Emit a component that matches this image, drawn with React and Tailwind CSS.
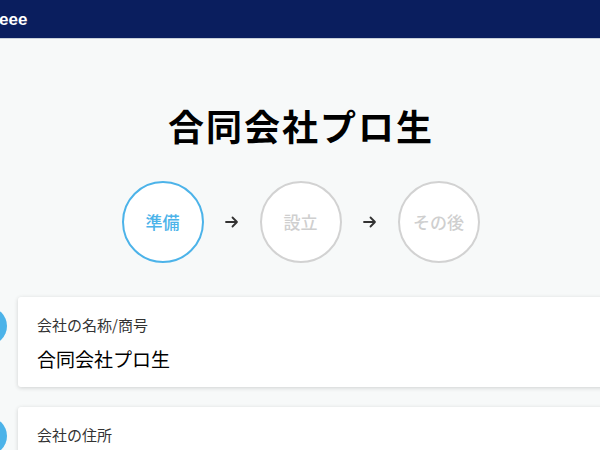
const steps = [
  { label: "準備", active: true },
  { label: "設立", active: false },
  { label: "その後", active: false },
];

const items = [
  { label: "会社の名称/商号", value: "合同会社プロ生" },
  { label: "会社の住所", value: "" },
];

function Arrow() {
  return (
    <svg width="14" height="12" viewBox="0 0 14 12" fill="none" className="text-[#333]">
      <path d="M1 6h11M7.5 1.5 12 6l-4.5 4.5" stroke="currentColor" strokeWidth="1.8" strokeLinecap="round" strokeLinejoin="round" />
    </svg>
  );
}

function StepCircle({ label, active }) {
  return (
    <div
      className={
        "w-[82px] h-[82px] rounded-full bg-white flex items-center justify-center text-[17px] font-medium border-2 " +
        (active ? "border-[#4cb3e9] text-[#4cb3e9]" : "border-[#d2d2d2] text-[#cfcfcf]")
      }
    >
      {label}
    </div>
  );
}

export default function App() {
  return (
    <div className="w-[600px] h-[450px] overflow-hidden bg-[#f7f9f9] font-['Noto_Sans_CJK_JP',sans-serif] text-[#222]">
      <header className="h-[39px] bg-[#0a1e5e] border-b border-[#c9d0da] flex items-center">
        <span className="text-white text-[17px] font-bold font-['Liberation_Sans',sans-serif] leading-none -ml-px">eee</span>
      </header>

      <h1 className="mt-[68px] text-center text-[36px] font-bold leading-none text-black tracking-[2px] pl-[2px]">
        合同会社プロ生
      </h1>

      <div className="mt-[38px] flex items-center justify-center gap-[21px] pl-[1px]">
        {steps.map((s, i) => (
          <div key={s.label} className="flex items-center gap-[21px]">
            {i > 0 && <Arrow />}
            <StepCircle label={s.label} active={s.active} />
          </div>
        ))}
      </div>

      <div className="mt-[34px] flex flex-col gap-[20px]">
        {items.map((it) => (
          <div key={it.label} className="flex items-start gap-[11px]">
            <div className="mt-[10px] -ml-[31px] w-[38px] h-[38px] rounded-full bg-[#4cb3e9] shrink-0" />
            <div className="w-[700px] h-[90px] shrink-0 bg-white rounded-[3px] shadow-[0_1px_4px_rgba(0,0,0,0.16)] pl-[19px] pt-[17px]">
              <div className="text-[15px] leading-[21px] text-[#333]">{it.label}</div>
              {it.value && (
                <div className="mt-[11px] text-[19px] leading-[26px] text-black">{it.value}</div>
              )}
            </div>
          </div>
        ))}
      </div>
    </div>
  );
}
